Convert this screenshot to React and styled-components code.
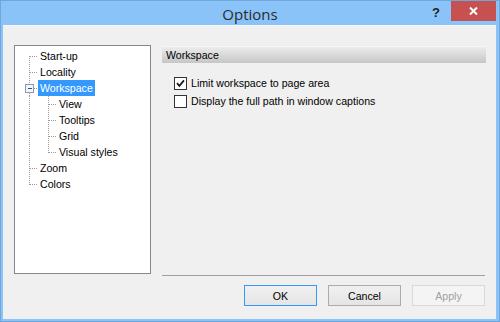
import React from "react";
import styled, { createGlobalStyle } from "styled-components";

const GlobalStyle = createGlobalStyle`
    html, body {
        margin: 0;
        padding: 0;
        background: #ffffff;
    }
    * {
        box-sizing: border-box;
    }
`

const Window = styled.div`
    width: 500px;
    height: 322px;
    display: flex;
    flex-direction: column;
    background-color: #8ac3f8;
    border: 1px solid #6fa6dc;
    font-family: "Liberation Sans", Arial, sans-serif;
    font-size: 10.6px;
    color: #000000;
    overflow: hidden;
`

const TitleBar = styled.div`
    height: 24px;
    display: flex;
    align-items: flex-start;
    position: relative;
`

const Title = styled.div`
    position: absolute;
    left: 0;
    right: 0;
    top: 3px;
    text-align: center;
    font-family: "Open Sans", "Noto Sans", sans-serif;
    font-size: 15px;
    color: #2b2b2b;
    line-height: 20px;
`

const TitleButtons = styled.div`
    margin-left: auto;
    display: flex;
    align-items: flex-start;
`

const HelpButton = styled.div`
    width: 30px;
    height: 20px;
    display: flex;
    align-items: center;
    justify-content: center;
    font-family: "Liberation Sans", Arial, sans-serif;
    font-weight: bold;
    font-size: 13px;
    color: #1e1e1e;
    margin-top: 1px;
`

const CloseButton = styled.div`
    width: 45px;
    height: 20px;
    background-color: #c75050;
    display: flex;
    align-items: center;
    justify-content: center;
    margin-right: 3px;
`

const Client = styled.div`
    flex: 1;
    margin: 0 3px 2px 2px;
    background-color: #f0f0f0;
    border-top: 1px solid #f6f6f6;
    padding: 19px 10px 0 11px;
    display: flex;
    flex-direction: column;
`

const Body = styled.div`
    display: flex;
    gap: 11px;
    height: 231px;
`

const TreeBox = styled.div`
    width: 137px;
    height: 229px;
    background: #ffffff;
    border: 1px solid #828790;
    padding-top: 2px;
`

const TreeRow = styled.div`
    height: 16px;
    display: flex;
    align-items: center;
`

const TreeLabel = styled.span`
    height: 16px;
    line-height: 16px;
    padding: 0 2px;
    white-space: nowrap;
    background-color: ${p => p.$selected ? "#3399ff" : "transparent"};
    color: ${p => p.$selected ? "#ffffff" : "#000000"};
`

const RightColumn = styled.div`
    flex: 1;
    display: flex;
    flex-direction: column;
    padding-top: 1px;
`

const SectionHeader = styled.div`
    height: 17px;
    line-height: 16px;
    padding-left: 4px;
    background: linear-gradient(#ececec, #c6c6c6);
    border-top: 1px solid #f8f8f8;
`

const OptionList = styled.div`
    margin-top: 11px;
    padding-left: 12px;
    display: flex;
    flex-direction: column;
`

const OptionRow = styled.label`
    height: 18px;
    display: flex;
    align-items: center;
    gap: 4px;
`

const Box = styled.span`
    width: 13px;
    height: 13px;
    border: 1px solid #333333;
    background: #ffffff;
    display: flex;
    align-items: center;
    justify-content: center;
`

const Spacer = styled.div`
    flex: 1;
`

const Separator = styled.div`
    height: 1px;
    margin-right: 1px;
    background-color: #a0a0a0;
`

const ButtonBar = styled.div`
    margin-top: 9px;
    display: flex;
    justify-content: flex-end;
    gap: 11px;
    padding-right: 1px;
`

const Button = styled.div`
    width: 73px;
    height: 21px;
    display: flex;
    align-items: center;
    justify-content: center;
    background: ${p => p.$disabled ? "#f4f4f4" : "linear-gradient(#f0f0f0, #e5e5e5)"};
    border: 1px solid ${p => p.$default ? "#3399ff" : p.$disabled ? "#d9d9d9" : "#acacac"};
    color: ${p => p.$disabled ? "#a0a0a0" : "#000000"};
`

const DOT = "#999999"

const Connector = ({ width, lines, horizontalFrom, box }) => (
    <svg width={width} height="16" style={{ flexShrink: 0 }} shapeRendering="crispEdges">
        {lines.map(([x, y1, y2], i) => (
            <line key={i} x1={x + 0.5} y1={y1} x2={x + 0.5} y2={y2} stroke={DOT} strokeDasharray="1 1" />
        ))}
        <line x1={horizontalFrom} y1="8.5" x2={width} y2="8.5" stroke={DOT} strokeDasharray="1 1" />
        {box && (
            <g>
                <rect x="10.5" y="4.5" width="8" height="8" fill="#f4f6fa" stroke="#8e9aad" />
                <line x1="12.5" y1="8.5" x2="17" y2="8.5" stroke="#2b4aa0" />
            </g>
        )}
    </svg>
)

const rootItems = [
    { label: "Start-up", first: true },
    { label: "Locality" },
    { label: "Workspace", selected: true, box: true, children: ["View", "Tooltips", "Grid", "Visual styles"] },
    { label: "Zoom" },
    { label: "Colors", last: true },
]

const TreeView = () => {
    const rows = []
    rootItems.forEach((item) => {
        const lines = item.box
            ? [[14, 0, 4], [14, 13, 16]]
            : [[14, item.first ? 8 : 0, item.last ? 9 : 16]]
        rows.push(
            <TreeRow key={item.label}>
                <Connector width={23} lines={lines} horizontalFrom={item.box ? 19 : 15} box={item.box} />
                <TreeLabel $selected={item.selected}>{item.label}</TreeLabel>
            </TreeRow>
        )
        if (item.children) {
            item.children.forEach((child, i) => {
                const lastChild = i === item.children.length - 1
                rows.push(
                    <TreeRow key={child}>
                        <Connector
                            width={42}
                            lines={[[14, 0, 16], [33, 0, lastChild ? 9 : 16]]}
                            horizontalFrom={34}
                        />
                        <TreeLabel>{child}</TreeLabel>
                    </TreeRow>
                )
            })
        }
    })
    return <TreeBox>{rows}</TreeBox>
}

const Check = () => (
    <svg width="9" height="9" viewBox="0 0 9 9">
        <path d="M1 4.2 L3.4 6.8 L8 1.4" fill="none" stroke="#1a1a1a" strokeWidth="1.8" />
    </svg>
)

const CheckOption = ({ checked, children }) => (
    <OptionRow>
        <Box>{checked && <Check />}</Box>
        <span>{children}</span>
    </OptionRow>
)

export default function App() {
    return (
        <>
            <GlobalStyle />
            <Window>
                <TitleBar>
                    <Title>Options</Title>
                    <TitleButtons>
                        <HelpButton>?</HelpButton>
                        <CloseButton>
                            <svg width="9" height="8" viewBox="0 0 9 8">
                                <path d="M1 0.5 L8 7.5 M8 0.5 L1 7.5" stroke="#ffffff" strokeWidth="2" />
                            </svg>
                        </CloseButton>
                    </TitleButtons>
                </TitleBar>
                <Client>
                    <Body>
                        <TreeView />
                        <RightColumn>
                            <SectionHeader>Workspace</SectionHeader>
                            <OptionList>
                                <CheckOption checked>Limit workspace to page area</CheckOption>
                                <CheckOption>Display the full path in window captions</CheckOption>
                            </OptionList>
                            <Spacer />
                            <Separator />
                        </RightColumn>
                    </Body>
                    <ButtonBar>
                        <Button $default>OK</Button>
                        <Button>Cancel</Button>
                        <Button $disabled>Apply</Button>
                    </ButtonBar>
                </Client>
            </Window>
        </>
    )
}
